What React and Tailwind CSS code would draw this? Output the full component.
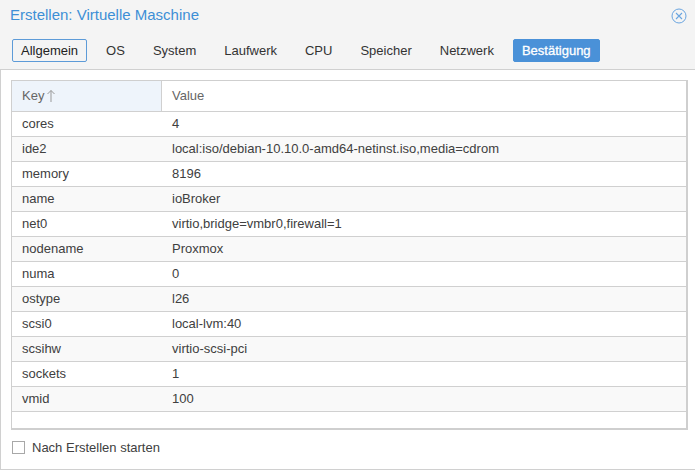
import React from "react";

const rows = [
  ["cores", "4"],
  ["ide2", "local:iso/debian-10.10.0-amd64-netinst.iso,media=cdrom"],
  ["memory", "8196"],
  ["name", "ioBroker"],
  ["net0", "virtio,bridge=vmbr0,firewall=1"],
  ["nodename", "Proxmox"],
  ["numa", "0"],
  ["ostype", "l26"],
  ["scsi0", "local-lvm:40"],
  ["scsihw", "virtio-scsi-pci"],
  ["sockets", "1"],
  ["vmid", "100"],
];

const tabs = ["Allgemein", "OS", "System", "Laufwerk", "CPU", "Speicher", "Netzwerk", "Bestätigung"];

export default function App() {
  return (
    <div className="w-[695px] h-[470px] bg-white flex flex-col text-[13px] text-[#404040]" style={{ fontFamily: '"Liberation Sans", Arial, sans-serif' }}>
      <div className="h-[70px] bg-[#f4f4f4] border-b border-[#d0d0d0] flex flex-col shrink-0">
        <div className="flex items-center justify-between pl-[10px] pr-[8px] h-[30px] pt-[1px]">
          <span className="text-[15px] text-[#3d8fd6]">Erstellen: Virtuelle Maschine</span>
          <svg width="16" height="16" viewBox="0 0 16 16">
            <circle cx="8" cy="8" r="7" fill="none" stroke="#6aa5e0" strokeWidth="1" />
            <path d="M5 5 L11 11 M11 5 L5 11" stroke="#6aa5e0" strokeWidth="1.1" />
          </svg>
        </div>
        <div className="flex items-center pl-[12px] mt-[9px] gap-[10px]">
          {tabs.map((t, i) => (
            <div
              key={t}
              className={
                "h-[23px] px-[8px] flex items-center border rounded-[2px] " +
                (i === 0
                  ? "border-[#5d9bd8] bg-[#f4f4f4] text-[#222]"
                  : i === tabs.length - 1
                  ? "border-[#4a91d8] bg-[#4a91d8] text-white [-webkit-text-stroke:0.3px_white]"
                  : "border-transparent text-[#333]")
              }
            >
              {t}
            </div>
          ))}
        </div>
      </div>
      <div className="flex-1 border-l border-b border-[#d0d0d0] pl-[10px] pr-[7px] pt-[10px] flex flex-col">
        <div className="h-[350px] border-t border-l border-r-2 border-b-2 border-[#cfcfcf] flex flex-col">
          <div className="flex h-[31px] border-b border-[#d0d0d0] shrink-0">
            <div className="w-[150px] bg-[#eef4fb] border-r border-[#d0d0d0] flex items-center pl-[10px] text-[#666]">
              Key
              <svg width="10" height="14" viewBox="0 0 10 14" className="ml-[2px]">
                <path d="M5 1.5 V13 M1.5 5 L5 1.5 L8.5 5" fill="none" stroke="#999" strokeWidth="1" />
              </svg>
            </div>
            <div className="flex-1 flex items-center pl-[10px] text-[#666]">Value</div>
          </div>
          {rows.map(([k, v], i) => (
            <div key={k} className={"flex h-[25px] border-b border-[#d0d0d0] shrink-0 " + (i % 2 === 1 ? "bg-[#f9f9f9]" : "bg-white")}>
              <div className="w-[150px] flex items-center pl-[10px]">{k}</div>
              <div className="flex-1 flex items-center pl-[10px]">{v}</div>
            </div>
          ))}
        </div>
        <div className="flex items-center mt-[8px]">
          <div className="w-[13px] h-[13px] border border-[#a8a8a8] bg-white mr-[7px] ml-[1px]" />
          <span>Nach Erstellen starten</span>
        </div>
      </div>
    </div>
  );
}
